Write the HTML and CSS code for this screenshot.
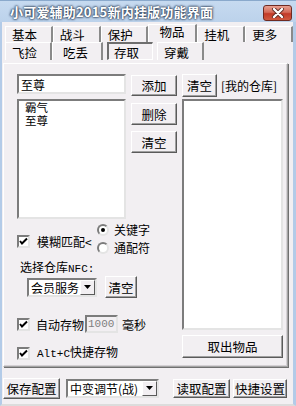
FILE: index.html
```html
<!DOCTYPE html>
<html lang="zh-CN">

<head>
  <meta charset="UTF-8">
  <title>小可爱辅助2015新内挂版功能界面</title>
  <link rel="stylesheet" href="styles.css">
</head>

<body>
  <div class="window">

    <!-- Title bar -->
    <div class="titlebar">
      <span class="title">小可爱辅助2015新内挂版功能界面</span>
      <div class="close-btn">
        <svg width="16" height="10" viewBox="0 0 16 10">
          <path d="M4 1 L12 9 M12 1 L4 9" stroke="#5a2a22" stroke-width="4" stroke-linecap="round"/>
          <path d="M4 1 L12 9 M12 1 L4 9" stroke="#ffffff" stroke-width="2.4" stroke-linecap="round"/>
        </svg>
      </div>
    </div>

    <div class="client">

      <!-- Main tabs -->
      <div class="tab-row">
        <div class="tab">基本</div>
        <div class="tab">战斗</div>
        <div class="tab">保护</div>
        <div class="tab selected">物品</div>
        <div class="tab">挂机</div>
        <div class="tab">更多</div>
      </div>

      <!-- Sub tabs -->
      <div class="tab-row sub">
        <div class="tab">飞捡</div>
        <div class="tab wide">吃丢</div>
        <div class="tab pressed">存取</div>
        <div class="tab boxed">穿戴</div>
      </div>

      <!-- Page -->
      <div class="panel">
        <div class="col-left">
          <div class="entry">
            <div class="fields">
              <div class="textbox">至尊</div>
              <div class="listbox small">
                <div>霸气</div>
                <div>至尊</div>
              </div>
            </div>
            <div class="side-buttons">
              <div class="btn b-add">添加</div>
              <div class="btn b-del">删除</div>
              <div class="btn b-clear">清空</div>
            </div>
          </div>

          <div class="match-row">
            <div class="check-line">
              <span class="checkbox"><svg width="9" height="9" viewBox="0 0 9 9"><path d="M1 4 L3 6.5 L8 1.5" stroke="#000" stroke-width="2" fill="none"/></svg></span>
              <span>模糊匹配&lt;</span>
            </div>
            <div class="radios">
              <div class="radio-line"><span class="radio on"></span>关键字</div>
              <div class="radio-line"><span class="radio"></span>通配符</div>
            </div>
          </div>

          <div class="npc-label">选择仓库<span class="mono big">NFC:</span></div>

          <div class="npc-row">
            <div class="combo npc">
              <span class="combo-text">会员服务</span>
              <span class="combo-arrow"><svg width="7" height="4" viewBox="0 0 7 4"><path d="M0 0 H7 L3.5 4 Z" fill="#000"/></svg></span>
            </div>
            <div class="btn b-npc-clear">清空</div>
          </div>

          <div class="check-line auto">
            <span class="checkbox"><svg width="9" height="9" viewBox="0 0 9 9"><path d="M1 4 L3 6.5 L8 1.5" stroke="#000" stroke-width="2" fill="none"/></svg></span>
            <span>自动存物</span>
            <span class="textbox ms mono">1000</span>
            <span>毫秒</span>
          </div>

          <div class="check-line hotkey">
            <span class="checkbox"><svg width="9" height="9" viewBox="0 0 9 9"><path d="M1 4 L3 6.5 L8 1.5" stroke="#000" stroke-width="2" fill="none"/></svg></span>
            <span><span class="mono big">Alt+C</span>快捷存物</span>
          </div>
        </div>

        <div class="col-right">
          <div class="store-head">
            <div class="btn b-store-clear">清空</div>
            <span>[我的仓库]</span>
          </div>
          <div class="listbox big"></div>
          <div class="btn b-take">取出物品</div>
        </div>
      </div>

      <!-- Bottom bar -->
      <div class="bottom-bar">
        <div class="btn b-save">保存配置</div>
        <div class="combo preset">
          <span class="combo-text">中变调节(战)</span>
          <span class="combo-arrow"><svg width="7" height="4" viewBox="0 0 7 4"><path d="M0 0 H7 L3.5 4 Z" fill="#000"/></svg></span>
        </div>
        <div class="btn b-load">读取配置</div>
        <div class="btn b-keys">快捷设置</div>
      </div>

    </div>
  </div>
</body>

</html>
```

FILE: styles.css
```css
body {
  margin: 0;
  padding: 0;
  font-family: "Noto Sans CJK SC", "Noto Sans CJK JP", sans-serif;
  font-size: 12px;
  line-height: 13px;
  color: #000;
  background: #f2eff2;
}

.mono {
  font-family: "Liberation Mono", "DejaVu Sans Mono", monospace;
  font-size: 10px;
}

.mono.big {
  font-size: 11px;
}

.window {
  width: 296px;
  height: 406px;
  overflow: hidden;
}

/* Title bar */
.titlebar {
  height: 22px;
  box-sizing: border-box;
  border-top: 1px solid #8aa9cc;
  background: linear-gradient(#c6daf0, #bcd2eb);
  display: flex;
  align-items: center;
  justify-content: space-between;
  padding: 0 4px 0 10px;
}

.title {
  color: #fff;
  font-weight: bold;
  font-size: 13px;
  letter-spacing: 0.2px;
  text-shadow: 0 0 2px #2c3e57, 0 0 2px #2c3e57, 0 0 3px #4a607e;
}

.close-btn {
  width: 29px;
  height: 16px;
  box-sizing: border-box;
  border: 1px solid #6e2a22;
  border-radius: 3px;
  background: linear-gradient(#e8a090 0%, #d46a58 45%, #c23a28 55%, #d05a40 100%);
  display: flex;
  align-items: center;
  justify-content: center;
  margin-top: 2px;
}

/* Client area */
.client {
  height: 384px;
  box-sizing: border-box;
  border-left: 2px solid #b3cbe8;
  border-right: 3px solid #b3cbe8;
  border-bottom: 2px solid #dcdcdc;
  background: #f2eff2;
}

/* Tabs */
.tab-row {
  display: flex;
  align-items: flex-end;
  padding-left: 3px;
  height: 20px;
}

.tab {
  width: 48px;
  height: 16px;
  box-sizing: border-box;
  border-top: 1px solid #fff;
  border-left: 1px solid #fff;
  border-right: 2px solid #8a8a8a;
  padding-left: 6px;
  display: flex;
  align-items: center;
  font-size: 12.5px;
  line-height: 12px;
}

.tab.selected {
  height: 18px;
  width: 49px;
  padding-left: 10px;
  padding-bottom: 3px;
}

.tab-row.sub {
  height: 18px;
}

.tab-row.sub .tab {
  height: 18px;
  width: 47px;
  padding-left: 6px;
  padding-top: 2px;
}

.tab-row.sub .tab.wide {
  width: 51px;
  padding-left: 10px;
}

.tab-row.sub .tab.pressed {
  margin-left: 4px;
  width: 46px;
  border-top: 2px solid #6e6e6e;
  border-left: 2px solid #6e6e6e;
  border-right: 1px solid #fff;
  border-bottom: 1px solid #fff;
  padding-left: 5px;
  padding-top: 3px;
}

.tab-row.sub .tab.boxed {
  margin-left: 4px;
  width: 47px;
  padding-left: 6px;
}

/* Page panel */
.panel {
  margin: 3px 0 0 1px;
  width: 285px;
  height: 304px;
  box-sizing: border-box;
  border: 1px solid #a4a4a4;
  border-top-color: #fff;
  border-left-color: #fff;
  box-shadow: inset -1px -1px 0 #d4d0d4, 1px 1px 0 #707070;
  padding: 10px 0 0 13px;
  display: flex;
  gap: 5px;
}

.col-left {
  width: 160px;
}

.col-right {
  width: 101px;
  display: flex;
  flex-direction: column;
}

.entry {
  display: flex;
  gap: 5px;
}

.fields {
  width: 109px;
}

.textbox {
  height: 20px;
  box-sizing: border-box;
  background: #fff;
  border: 2px solid;
  border-color: #7c7c7c #e4e4e4 #e4e4e4 #7c7c7c;
  padding: 1px 2px;
  display: flex;
  align-items: center;
}

.listbox {
  background: #fff;
  box-sizing: border-box;
  border: 2px solid;
  border-color: #7c7c7c #e4e4e4 #e4e4e4 #7c7c7c;
  padding: 0 6px;
}

.listbox.small {
  margin-top: 5px;
  height: 120px;
}

.listbox.small div {
  height: 13px;
  line-height: 13px;
  font-size: 11.5px;
}

.listbox.big {
  margin-top: 2px;
  height: 231px;
}

.side-buttons {
  width: 46px;
  display: flex;
  flex-direction: column;
}

.btn {
  box-sizing: border-box;
  height: 22px;
  background: #f2eff2;
  border: 1px solid;
  border-color: #fff #5a5a5a #5a5a5a #fff;
  box-shadow: inset -1px -1px 0 #a0a0a0;
  display: flex;
  align-items: center;
  justify-content: center;
  font-size: 12.5px;
}

.b-add { margin-top: 1px; height: 21px; }
.b-del { margin-top: 7px; }
.b-clear { margin-top: 6px; }

/* Options */
.match-row {
  display: flex;
  align-items: center;
  margin-top: 3px;
  height: 33px;
}

.check-line {
  display: flex;
  align-items: center;
  gap: 7px;
}

.checkbox {
  width: 13px;
  height: 13px;
  box-sizing: border-box;
  background: #fff;
  border: 2px solid;
  border-color: #7c7c7c #e4e4e4 #e4e4e4 #7c7c7c;
  display: flex;
  align-items: center;
  justify-content: center;
}

.match-row .check-line {
  padding-top: 5px;
  width: 80px;
}

.radios {
  display: flex;
  flex-direction: column;
  gap: 5px;
  font-size: 12px;
}

.radio-line {
  display: flex;
  align-items: center;
  gap: 5px;
  height: 13px;
}

.radio {
  width: 12px;
  height: 12px;
  box-sizing: border-box;
  border-radius: 50%;
  background: #fff;
  border: 2px solid;
  border-color: #7c7c7c #e4e4e4 #e4e4e4 #7c7c7c;
  display: flex;
  align-items: center;
  justify-content: center;
}

.radio.on::after {
  content: "";
  width: 4px;
  height: 4px;
  border-radius: 50%;
  background: #000;
}

.npc-label {
  margin: 5px 0 0 3px;
  height: 14px;
  display: flex;
  align-items: baseline;
}

.npc-row {
  display: flex;
  align-items: center;
  gap: 8px;
  margin: 2px 0 0 10px;
  height: 22px;
}

.combo {
  height: 19px;
  box-sizing: border-box;
  background: #fff;
  border: 2px solid;
  border-color: #7c7c7c #e4e4e4 #e4e4e4 #7c7c7c;
  display: flex;
  align-items: center;
  justify-content: space-between;
  padding-left: 2px;
}

.combo.npc {
  width: 70px;
}

.combo-arrow {
  width: 15px;
  height: 15px;
  box-sizing: border-box;
  background: #f2eff2;
  border: 1px solid;
  border-color: #fff #5a5a5a #5a5a5a #fff;
  display: flex;
  align-items: center;
  justify-content: center;
}

.b-npc-clear {
  width: 32px;
}

.check-line.auto {
  margin-top: 17px;
  height: 18px;
  gap: 6px;
}

.textbox.ms {
  width: 33px;
  height: 18px;
  color: #808080;
  background: #f2eff2;
  margin: 0 -2px 0 -5px;
  padding: 0 1px;
  font-size: 11px;
}

.check-line.hotkey {
  margin-top: 12px;
}

/* Right column */
.store-head {
  display: flex;
  align-items: center;
  gap: 4px;
  height: 23px;
}

.b-store-clear {
  width: 35px;
  height: 23px;
}

.b-take {
  margin-top: 5px;
  height: 23px;
}

/* Bottom bar */
.bottom-bar {
  display: flex;
  align-items: center;
  padding-left: 1px;
  margin-top: 10px;
  height: 22px;
}

.b-save {
  width: 57px;
  height: 21px;
}

.combo.preset {
  width: 93px;
  margin-left: 6px;
}

.b-load {
  width: 57px;
  height: 19px;
  margin-left: 14px;
}

.b-keys {
  width: 54px;
  height: 19px;
  margin-left: 3px;
}
```
